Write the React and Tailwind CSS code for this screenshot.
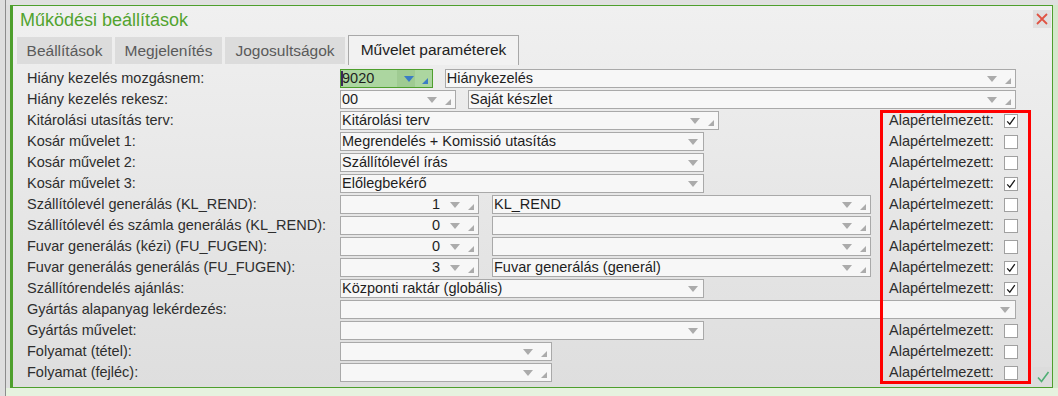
import React from 'react';

const rows = [
  {
    label: 'Hiány kezelés mozgásnem:',
    fields: [
      { w: 93, v: '9020', green: true, corner: true },
      { w: 572, ml: 12, v: 'Hiánykezelés', corner: true },
    ],
  },
  {
    label: 'Hiány kezelés rekesz:',
    fields: [
      { w: 116, v: '00', corner: true },
      { w: 548, ml: 12, v: 'Saját készlet', corner: true },
    ],
  },
  { label: 'Kitárolási utasítás terv:', fields: [{ w: 379, v: 'Kitárolási terv', corner: true }], check: true },
  { label: 'Kosár művelet 1:', fields: [{ w: 364, v: 'Megrendelés + Komissió utasítás' }], check: false },
  { label: 'Kosár művelet 2:', fields: [{ w: 364, v: 'Szállítólevél írás' }], check: false },
  { label: 'Kosár művelet 3:', fields: [{ w: 364, v: 'Előlegbekérő' }], check: true },
  {
    label: 'Szállítólevél generálás (KL_REND):',
    fields: [
      { w: 139, v: '1', right: true, corner: true },
      { w: 379, ml: 13, v: 'KL_REND', corner: true },
    ],
    check: false,
  },
  {
    label: 'Szállítólevél és számla generálás (KL_REND):',
    fields: [
      { w: 139, v: '0', right: true, corner: true },
      { w: 379, ml: 13, v: '', corner: true },
    ],
    check: false,
  },
  {
    label: 'Fuvar generálás (kézi) (FU_FUGEN):',
    fields: [
      { w: 139, v: '0', right: true, corner: true },
      { w: 379, ml: 13, v: '', corner: true },
    ],
    check: false,
  },
  {
    label: 'Fuvar generálás generálás (FU_FUGEN):',
    fields: [
      { w: 139, v: '3', right: true, corner: true },
      { w: 379, ml: 13, v: 'Fuvar generálás (generál)', corner: true },
    ],
    check: true,
  },
  { label: 'Szállítórendelés ajánlás:', fields: [{ w: 364, v: 'Központi raktár (globális)' }], check: true },
  { label: 'Gyártás alapanyag lekérdezés:', fields: [{ w: 676, v: '' }] },
  { label: 'Gyártás művelet:', fields: [{ w: 364, v: '' }], check: false },
  { label: 'Folyamat (tétel):', fields: [{ w: 212, v: '', corner: true }], check: false },
  { label: 'Folyamat (fejléc):', fields: [{ w: 212, v: '', corner: true }], check: false },
];

const Arrow = ({ color }) => (
  <svg width="10" height="6" viewBox="0 0 10 6" className="shrink-0">
    <path d="M0 0 L10 0 L5 6 Z" fill={color} />
  </svg>
);

const Corner = ({ color }) => (
  <svg width="6" height="6" viewBox="0 0 6 6" className="shrink-0 self-end mb-[3px]">
    <path d="M6 0 L6 6 L0 6 Z" fill={color} />
  </svg>
);

const Field = ({ f }) => {
  const tone = f.green ? '#3b7cc4' : '#ababab';
  return (
    <div
      className={`relative flex items-center h-[19px] border ${
        f.green ? 'border-[#4e9f2d] bg-[#acd6a0]' : 'border-[#a9a9a9] bg-[#f7f7f7]'
      }`}
      style={{ width: f.w, marginLeft: f.ml || 0 }}
    >
      {f.green && <div className="absolute left-0 top-[1px] w-[2px] h-[15px] bg-[#3a2a5a]" />}
      {f.green && <div className="absolute right-[17px] top-0 w-[18px] h-full bg-[#9fcb92]" />}
      <span
        className={`flex-1 min-w-0 truncate pl-[1px] leading-[17px] text-[#1e1e1e] ${
          f.right ? 'text-right pr-[10px]' : ''
        }`}
      >
        {f.v}
      </span>
      <div className="relative flex items-center h-full">
        <Arrow color={tone} />
        {f.corner ? (
          <div className="flex h-full items-end ml-[8px] mr-[4px]">
            <Corner color={tone} />
          </div>
        ) : (
          <div className="w-[5px]" />
        )}
      </div>
    </div>
  );
};

const Checkbox = ({ checked }) => (
  <div className="w-[14px] h-[14px] border border-[#a0a0a0] bg-white flex items-center justify-center">
    {checked && (
      <svg width="12" height="12" viewBox="0 0 12 12">
        <path d="M2.2 6.4 L4.8 9.2 L9.8 2.2" fill="none" stroke="#1b1b1b" strokeWidth="1.3" />
      </svg>
    )}
  </div>
);

const tabs = [
  { t: 'Beállítások', w: 95 },
  { t: 'Megjelenítés', w: 107 },
  { t: 'Jogosultságok', w: 120 },
];

export default function App() {
  return (
    <div className="w-[1058px] h-[396px] flex overflow-hidden bg-[#e6f2df] font-['Liberation_Sans',Arial,sans-serif]">
      {/* left desktop strip */}
      <div className="w-[6px] h-full bg-[#dedede] border-r border-[#8c8c8c]" />

      <div className="flex-1 flex flex-col">
        <div className="h-[5px] bg-[#e0e0e0]" />

        <div className="flex h-[383px]">
          <div className="w-[4px] bg-[#dedede]" />

          {/* dialog */}
          <div className="relative w-[1043px] flex flex-col border-l-[3px] border-t border-r border-b border-[#4e9f2d] bg-linear-to-b from-[#f0f0f0] to-[#dedede]">
            <div className="h-[29px] flex items-start justify-between">
              <div className="pl-[7px] pt-[3px] text-[18px] leading-[22px] text-[#52a32f]">Működési beállítások</div>
              <div className="mt-[4px] mr-[1px] w-[18px] h-[18px] bg-[#e0e0e0] flex items-center justify-center">
                <svg width="12" height="12" viewBox="0 0 12 12">
                  <path d="M1 1 L11 11 M11 1 L1 11" stroke="#e05444" strokeWidth="1.8" />
                </svg>
              </div>
            </div>

            {/* tabs */}
            <div className="h-[30px] flex items-end pl-[4px] gap-[3px]">
              {tabs.map((tab) => (
                <div
                  key={tab.t}
                  className="h-[27px] mb-[1px] bg-[#dcdcdc] text-[#5a5a5a] text-[15.5px] leading-[27px] text-center"
                  style={{ width: tab.w }}
                >
                  {tab.t}
                </div>
              ))}
              <div className="w-[171px] h-[30px] border border-b-0 border-[#a8a8a8] bg-[#f2f2f2] text-[#222] text-[15.5px] leading-[28px] text-center">
                Művelet paraméterek
              </div>
            </div>

            {/* rows */}
            <div className="pt-[3px] flex flex-col text-[14.5px]">
              {rows.map((r) => (
                <div key={r.label} className="h-[21px] flex items-center">
                  <div className="w-[327px] pl-[14px] text-[#2e2e2e] whitespace-nowrap">{r.label}</div>
                  <div className={`flex items-center ${r.check === undefined ? 'w-[676px]' : 'w-[549px]'}`}>
                    {r.fields.map((f, i) => (
                      <Field key={i} f={f} />
                    ))}
                  </div>
                  {r.check !== undefined && (
                    <div className="w-[129px] flex items-center justify-between text-[#2e2e2e]">
                      <span>Alapértelmezett:</span>
                      <Checkbox checked={r.check} />
                    </div>
                  )}
                </div>
              ))}
            </div>

            {/* red highlight */}
            <div className="absolute left-[867px] top-[104px] w-[151px] h-[274px] border-[3px] border-[#ff0000] pointer-events-none" />

            {/* ok button */}
            <div className="absolute right-0 bottom-0 w-[19px] h-[20px] bg-[#dcdcdc] flex items-center justify-center">
              <svg width="14" height="14" viewBox="0 0 14 14">
                <path d="M2 7.5 L5.5 11.5 L12.5 2" fill="none" stroke="#4fae74" strokeWidth="1.6" />
              </svg>
            </div>
          </div>

          <div className="flex-1 bg-[#d5e8cc]" />
        </div>

        <div className="flex-1 bg-[#e6f2df]" />
      </div>
    </div>
  );
}
